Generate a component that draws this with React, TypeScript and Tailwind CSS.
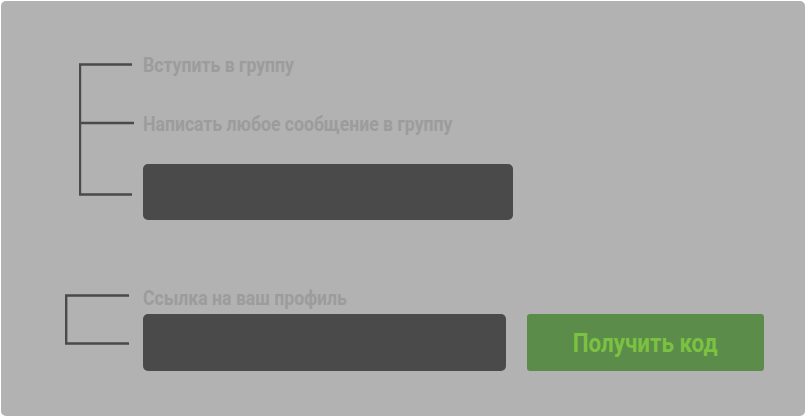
import React from 'react';

const font = { fontFamily: 'Roboto, "Noto Sans", sans-serif' };

// bracket drawings connecting labels to fields
const BracketThree = () => (
  <svg width="55" height="133" viewBox="0 0 55 133" className="mt-[10px] shrink-0">
    <path d="M53 1.5 H1 V131.5 H53 M1 60 H55" fill="none" stroke="#4a4a4a" strokeWidth="2.4" />
  </svg>
);

const BracketTwo = () => (
  <svg width="64" height="51" viewBox="0 0 64 51" className="mt-[8px] shrink-0">
    <path d="M64 1.5 H1.2 V49.5 H64" fill="none" stroke="#4a4a4a" strokeWidth="2.4" />
  </svg>
);

const Label: React.FC<{ children: React.ReactNode; className?: string }> = ({ children, className }) => (
  <div className={`h-[24px] leading-[24px] text-[21px] font-bold text-[#9c9c9c] whitespace-nowrap origin-left scale-x-[0.84] ${className ?? ''}`}>
    {children}
  </div>
);

export default function App() {
  return (
    <div className="w-[806px] h-[417px] p-px bg-white" style={font}>
      <div className="h-full rounded-[5px] bg-[#b2b2b2] flex flex-col">
        <div className="flex items-start pl-[78px] pt-[52px]">
          <BracketThree />
          <div className="ml-[9px] flex flex-col">
            <Label>Вступить в группу</Label>
            <Label className="mt-[35px]">Написать любое сообщение в группу</Label>
            <div className="mt-[28px] w-[370px] h-[56px] rounded-[5px] bg-[#4a4a4a]" />
          </div>
        </div>

        <div className="flex items-start pl-[64px] mt-[66px]">
          <BracketTwo />
          <div className="ml-[14px] flex flex-col">
            <Label>Ссылка на ваш профиль</Label>
            <div className="mt-[4px] flex gap-[21px]">
              <div className="w-[363px] h-[57px] rounded-[5px] bg-[#4a4a4a]" />
              <button className="w-[237px] h-[57px] rounded-[3px] bg-[#5b8c4a] flex items-center justify-center">
                <span className="text-[26px] leading-[30px] font-bold text-[#7cc142] whitespace-nowrap scale-x-[0.86]">
                  Получить код
                </span>
              </button>
            </div>
          </div>
        </div>
      </div>
    </div>
  );
}
